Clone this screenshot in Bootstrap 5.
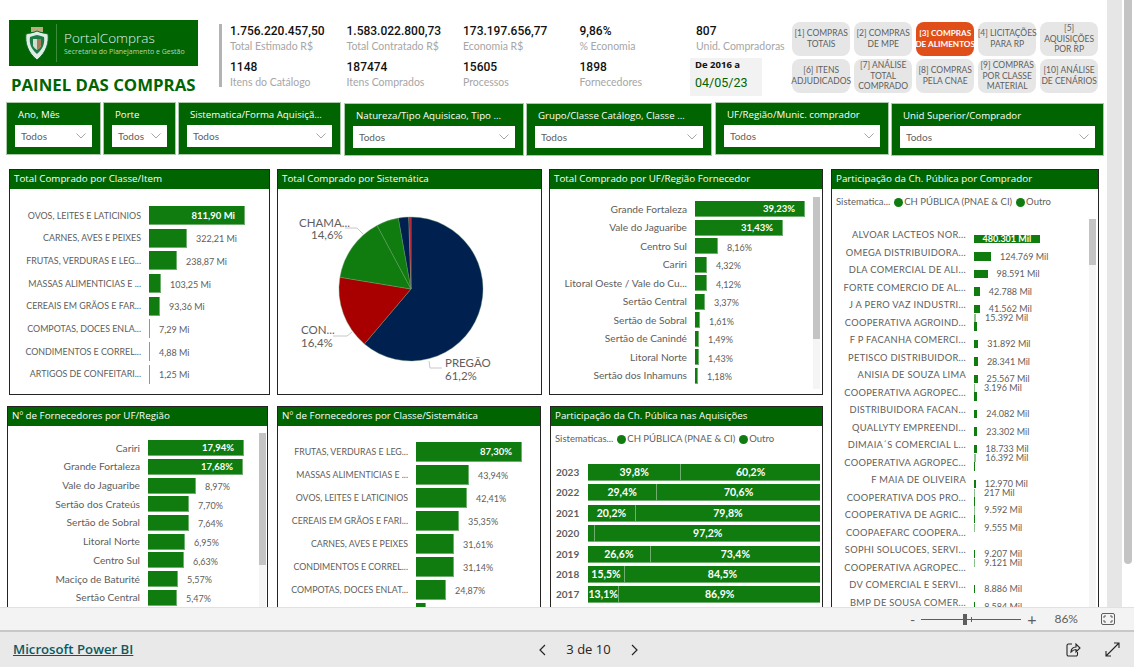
<!DOCTYPE html>
<html lang="pt-br">
<head>
  <meta charset="UTF-8">
  <meta name="viewport" content="width=device-width, initial-scale=1">
  <title>Painel das Compras</title>
  <link href="https://cdn.jsdelivr.net/npm/bootstrap@5.3.3/dist/css/bootstrap.min.css" rel="stylesheet">
  <style>
    html, body { height: 667px; overflow: hidden; background: #fff; }
    body { font-family: "Open Sans", sans-serif; color: #605e5c; }
    .report { height: 607px; overflow: hidden; }
    .canvas { width: 1107px; }
    .strip { width: 15px; background: #e6e6e6; }
    .outer-thumb { width: 8px; height: 564px; margin-left: 2px; background: #c4c4c4; border-radius: 0 0 4px 4px; }

    /* cabecalho */
    .top { height: 102px; padding: 20px 0 0 9px; }
    .logo-col { width: 189px; }
    .logo-box { height: 46px; background: #006400; color: #e6f0e6; padding-left: 16px; }
    .logo-sep { width: 1px; height: 38px; background: #3d8a3d; margin: 0 7px 0 7px; }
    .logo-name { font-size: 13.5px; font-weight: 300; line-height: 17px; }
    .logo-sub { font-size: 7px; line-height: 9px; color: #b7d4b7; white-space: nowrap; }
    .titulo { font-size: 16.8px; font-weight: 700; color: #006400; margin: 9px 0 0 2px; line-height: 20px; white-space: nowrap; }
    .divisor { width: 3px; height: 63px; background: #b3b3b3; margin: 4px 8px 0 21px; }
    .kpis { width: 562px; margin-top: 4px; display: grid; grid-template-columns: 116.5px 116.5px 116.5px 116.5px 96px; grid-auto-rows: 36px; }
    .kpi-val { font-family: Roboto, sans-serif; font-size: 12px; font-weight: 500; color: #111; line-height: 15px; }
    .kpi-cap { font-family: Lato, sans-serif; font-size: 10.5px; color: #a6a6a6; line-height: 15px; white-space: nowrap; }
    .data-box { width: 72px; height: 38px; margin: -2px 0 0 -6px; background: #f2f2f2; padding: 0 5px; }
    .data-de { font-size: 9.5px; font-weight: 700; color: #111; line-height: 13px; }
    .data-ate { font-family: Roboto, sans-serif; font-size: 12.5px; color: #006400; line-height: 24px; }
    .btns { margin-top: 2px; display: grid; grid-template-columns: repeat(5, 58.4px); grid-auto-rows: 33.5px; gap: 3.5px 3.6px; }
    .btn-pag { background: #e6e6e6; border-radius: 8px; font-family: Lato, sans-serif; font-size: 8.5px; line-height: 10.5px; color: #605e5c; text-align: center; display: flex; align-items: center; justify-content: center; padding: 0; white-space: nowrap; }
    .btn-pag.ativo { background: #e04e1a; color: #fff; font-weight: 700; font-size: 8.2px; }

    /* filtros */
    .filtros { margin-left: 6px; gap: 2px; height: 54px; }
    .filtro { background: #006400; border: 1px solid #a9c9a9; padding: 0 8px; height: 53px; color: #fff; }
    .filtro.baixo { margin-top: 1px; }
    .filtro-tit { font-size: 9.7px; line-height: 12px; padding: 6px 0 0 3px; height: 22px; white-space: nowrap; overflow: hidden; }
    .filtro-box { background: #fff; height: 22px; color: #605e5c; font-family: Lato, sans-serif; font-size: 10px; padding: 0 6px; }
    .f1 { width: 95px; } .f2 { width: 73px; } .f3 { width: 163px; } .f4 { width: 180px; margin-left: 1px; }
    .f5 { width: 186px; } .f6 { width: 174px; margin-left: 1px; } .f7 { width: 213px; }

    /* graficos */
    .graficos { margin-top: 13px; height: 500px; }
    .linha { gap: 7px; height: 226px; }
    .linha + .linha { margin-top: 11px; height: 240px; }
    .painel { border: 1px solid #252423; border-radius: 0; overflow: hidden; flex: none; }
    .painel .card-header { background: #006400; color: #fff; border: 0; border-radius: 0; padding: 0 0 0 4px; height: 19px; font-size: 9.8px; line-height: 18px; white-space: nowrap; }
    .c1 { width: 261px; margin-left: 9px; } .c2 { width: 265px; } .c3 { width: 274px; }
    .c4 { width: 261px; margin-left: 7px; } .c5 { width: 264px; margin-left: 2px; } .c6 { width: 273px; margin-left: 2px; }
    .c7 { width: 268px; height: 460px; margin-left: 8px; }

    .barras { padding-top: var(--topo); font-family: Lato, sans-serif; }
    .barra-lin { height: var(--passo); display: flex; align-items: center; }
    .barra-lab { width: var(--lab); margin-right: var(--sep); text-align: right; white-space: nowrap; font-size: var(--fonte); color: #605e5c; flex: none; }
    .barra { height: var(--alt); background: #107c10; border-right: 1px solid #6fae6f; border-bottom: 1px solid #6fae6f; color: #fff; font-weight: 700; font-size: 9.5px; text-align: right; line-height: var(--alt); white-space: nowrap; box-sizing: border-box; flex: none; }
    .barra.rotulada { padding-right: 9px; }
    .barra-val { font-size: 9px; margin: 2px 0 0 9px; color: #605e5c; white-space: nowrap; }
    .b1 { --topo: 15px; --passo: 22.7px; --alt: 19px; --lab: 131px; --sep: 8px; --fonte: 8.9px; }
    .b3 { --topo: 11px; --passo: 18.5px; --alt: 16px; --lab: 137px; --sep: 8px; --fonte: 10.2px; }
    .b4 { --topo: 13px; --passo: 18.7px; --alt: 16px; --lab: 132px; --sep: 8px; --fonte: 10.2px; }
    .b5 { --topo: 14px; --passo: 23px; --alt: 20px; --lab: 130px; --sep: 8px; --fonte: 8.8px; }

    .legenda { font-family: Lato, sans-serif; font-size: 9.5px; height: 25px; padding: 2px 0 0 4px; white-space: nowrap; }
    .ponto { width: 9px; height: 9px; border-radius: 50%; background: #107c10; display: inline-block; margin: 0 1px 0 4px; }
    .rolagem { position: absolute; width: 7px; background: #f5f5f5; }
    .rolagem i { display: block; background: #c4c4c4; width: 100%; }
    .r3 { left: 263px; top: 27px; height: 192px; } .r3 i { height: 142px; }
    .r4 { left: 251px; top: 26px; height: 214px; } .r4 i { height: 132px; }
    .r7 { left: 257px; top: 49px; height: 400px; } .r7 i { height: 46px; }

    .anos { padding-top: 13px; }
    .ano-lin { display: flex; align-items: center; height: 17px; margin-bottom: 3.4px; }
    .ano-lab { width: 37px; padding-left: 5px; font-weight: 700; font-size: 10px; font-family: Lato, sans-serif; flex: none; }
    .pilha { width: 232px; height: 17px; display: flex; }
    .seg { background: #107c10; color: #fff; font-family: Lato, sans-serif; font-weight: 700; font-size: 10.5px; line-height: 17px; text-align: center; white-space: nowrap; overflow: hidden; border-bottom: 1px solid #6fae6f; }
    .seg + .seg { border-left: 1px solid #6fae6f; }

    .comp-topo { padding-top: 12px; }
    .comp-lin { height: 17.5px; display: flex; font-family: Lato, sans-serif; }
    .comp-lab { width: 134px; margin-right: 8px; text-align: right; font-size: 9.3px; letter-spacing: .3px; line-height: 17.5px; white-space: nowrap; flex: none; }
    .comp-bar { flex: 1; }
    .comp-slot { height: 8.75px; display: flex; align-items: center; }
    .comp-ret { height: 8.5px; background: #107c10; color: #fff; font-weight: 700; font-size: 9px; line-height: 8.5px; text-align: center; white-space: nowrap; flex: none; }
    .comp-ret.fraco { background: #8cc08c; }
    .comp-val { font-size: 9px; line-height: 8px; margin-left: 9px; white-space: nowrap; }

    /* rodape */
    .barra-zoom { height: 23px; background: #f3f3f3; border-top: 1px solid #e1e1e1; font-family: Lato, sans-serif; color: #605e5c; padding-right: 19px; }
    .trilho { width: 100px; height: 1px; background: #605e5c; position: relative; margin: 0 6px; }
    .cursor { position: absolute; left: 42px; top: -5px; width: 4px; height: 11px; background: #605e5c; }
    .marca { position: absolute; left: 50px; top: -2px; width: 1px; height: 5px; background: #605e5c; }
    .zoom-pct { font-size: 12px; margin: 0 23px 0 18px; }
    .rodape { height: 37px; background: #e9e9e9; border-top: 2px solid #c8c8c8; position: relative; }
    .rodape-link { font-size: 13.2px; font-weight: 600; color: #0b5a63; text-decoration: underline; margin-left: 13px; }
    .pager { position: absolute; left: 538px; top: 0; height: 35px; width: 101px; color: #252423; font-size: 13px; }
    .acoes { gap: 24px; margin-right: 14px; }
  </style>
</head>
<body>
  <div class="report d-flex">
    <div class="canvas">
      <div class="top d-flex align-items-start">
        <div class="logo-col">
          <div class="logo-box d-flex align-items-center">
            <svg width="24" height="33" viewBox="0 0 24 33">
              <rect x="6" y="0" width="12" height="5" fill="#b9ad7e"/>
              <path d="M12 4 C16 6 20 6 23 7 C24 15 22 25 12 33 C2 25 0 15 1 7 C4 6 8 6 12 4Z" fill="#dfeee2" stroke="#0b6b2f"/>
              <path d="M12 8 C15 9 17 9 19 10 C20 16 18 22 12 27 C6 22 4 16 5 10 C7 9 9 9 12 8Z" fill="#1f7a4a"/>
              <path d="M8 12 H16 V19 C15 21 13 22 12 23 C11 22 9 21 8 19Z" fill="#cfe0d0"/>
              <path d="M12 12 H16 V19 C15 21 13 22 12 23Z" fill="#a87a55"/>
            </svg>
            <div class="logo-sep"></div>
            <div>
              <div class="logo-name">PortalCompras</div>
              <div class="logo-sub">Secretaria do Planejamento e Gestão</div>
            </div>
          </div>
          <div class="titulo">PAINEL DAS COMPRAS</div>
        </div>
        <div class="divisor"></div>
        <div class="kpis">
          <div><div class="kpi-val">1.756.220.457,50</div><div class="kpi-cap">Total Estimado R$</div></div>
          <div><div class="kpi-val">1.583.022.800,73</div><div class="kpi-cap">Total Contratado R$</div></div>
          <div><div class="kpi-val">173.197.656,77</div><div class="kpi-cap">Economia R$</div></div>
          <div><div class="kpi-val">9,86%</div><div class="kpi-cap">% Economia</div></div>
          <div><div class="kpi-val">807</div><div class="kpi-cap">Unid. Compradoras</div></div>
          <div><div class="kpi-val">1148</div><div class="kpi-cap">Itens do Catálogo</div></div>
          <div><div class="kpi-val">187474</div><div class="kpi-cap">Itens Comprados</div></div>
          <div><div class="kpi-val">15605</div><div class="kpi-cap">Processos</div></div>
          <div><div class="kpi-val">1898</div><div class="kpi-cap">Fornecedores</div></div>
          <div class="data-box"><div class="data-de">De 2016 a</div><div class="data-ate">04/05/23</div></div>
        </div>
        <div class="btns">
          <div class="btn-pag">[1] COMPRAS<br>TOTAIS</div>
          <div class="btn-pag">[2] COMPRAS<br>DE MPE</div>
          <div class="btn-pag ativo">[3] COMPRAS<br>DE ALIMENTOS</div>
          <div class="btn-pag">[4] LICITAÇÕES<br>PARA RP</div>
          <div class="btn-pag">[5]<br>AQUISIÇÕES<br>POR RP</div>
          <div class="btn-pag">[6] ITENS<br>ADJUDICADOS</div>
          <div class="btn-pag">[7] ANÁLISE<br>TOTAL<br>COMPRADO</div>
          <div class="btn-pag">[8] COMPRAS<br>PELA CNAE</div>
          <div class="btn-pag">[9] COMPRAS<br>POR CLASSE<br>MATERIAL</div>
          <div class="btn-pag">[10] ANÁLISE<br>DE CENÁRIOS</div>
        </div>
      </div>

      <div class="filtros d-flex align-items-start" id="filtros"></div>

      <div class="graficos d-flex align-items-start">
        <div>
          <div class="linha d-flex">
            <div class="card painel c1">
              <div class="card-header">Total Comprado por Classe/Item</div>
              <div class="barras b1" id="g1"></div>
            </div>
            <div class="card painel c2">
              <div class="card-header">Total Comprado por Sistemática</div>
              <svg width="263" height="205" id="pizza" font-family="Lato, sans-serif" font-size="11.5" fill="#605e5c">
                <g id="fatias"></g>
                <path d="M67 39 H79 L85 45 M55 147 H69 L74 143 M164 179 H152 L151 172" fill="none" stroke="#c8c8c8"/>
                <text x="21" y="38">CHAMA...</text><text x="33" y="50">14,6%</text>
                <text x="23" y="145">CON...</text><text x="23" y="158">16,4%</text>
                <text x="167" y="178">PREGÃO</text><text x="167" y="191">61,2%</text>
              </svg>
            </div>
            <div class="card painel c3 position-relative">
              <div class="card-header">Total Comprado por UF/Região Fornecedor</div>
              <div class="barras b3" id="g3"></div>
              <div class="rolagem r3"><i></i></div>
            </div>
          </div>
          <div class="linha d-flex">
            <div class="card painel c4 position-relative">
              <div class="card-header">Nº de Fornecedores por UF/Região</div>
              <div class="barras b4" id="g4"></div>
              <div class="rolagem r4"><i></i></div>
            </div>
            <div class="card painel c5">
              <div class="card-header">Nº de Fornecedores por Classe/Sistemática</div>
              <div class="barras b5" id="g5"></div>
            </div>
            <div class="card painel c6">
              <div class="card-header">Participação da Ch. Pública nas Aquisições</div>
              <div class="legenda d-flex align-items-center">Sistematicas... <span class="ponto"></span>CH PÚBLICA (PNAE &amp; CI) <span class="ponto"></span>Outro</div>
              <div class="anos" id="g6"></div>
            </div>
          </div>
        </div>
        <div class="card painel c7 position-relative">
          <div class="card-header">Participação da Ch. Pública por Comprador</div>
          <div class="legenda d-flex align-items-center">Sistematica... <span class="ponto"></span>CH PÚBLICA (PNAE &amp; CI) <span class="ponto"></span>Outro</div>
          <div id="g7" class="comp-topo"></div>
          <div class="rolagem r7"><i></i></div>
        </div>
      </div>
    </div>
    <div class="strip"></div>
    <div class="outer-thumb"></div>
  </div>

  <div class="barra-zoom d-flex align-items-center justify-content-end">
    <span class="small">-</span>
    <div class="trilho"><div class="cursor"></div><div class="marca"></div></div>
    <span>+</span>
    <span class="zoom-pct">86%</span>
    <svg width="14" height="12" viewBox="0 0 14 12" fill="none" stroke="#605e5c"><rect x=".5" y=".5" width="13" height="11" rx="1.5"/><path d="M3 5V3H5M9 3H11V5M11 7V9H9M5 9H3V7"/></svg>
  </div>
  <div class="rodape d-flex align-items-center justify-content-between">
    <a class="rodape-link" href="#">Microsoft Power BI</a>
    <div class="pager d-flex align-items-center justify-content-between">
      <svg width="8" height="12" viewBox="0 0 8 12" fill="none" stroke="#252423" stroke-width="1.2"><path d="M7 1L2 6L7 11"/></svg>
      <span>3 de 10</span>
      <svg width="8" height="12" viewBox="0 0 8 12" fill="none" stroke="#252423" stroke-width="1.2"><path d="M1 1L6 6L1 11"/></svg>
    </div>
    <div class="acoes d-flex align-items-center">
      <svg width="15" height="15" viewBox="0 0 15 15" fill="none" stroke="#252423" stroke-width="1.1"><path d="M6 2H2.5A1.5 1.5 0 0 0 1 3.5V12.500A1.500 1.500 0 0 0 2.500 14H10A1.500 1.500 0 0 0 11.500 12.500V10M5 10C5 7 7 5 10 5V2L14 6L10 10V7.500C8 7.500 6.500 8.500 5 10Z"/></svg>
      <svg width="15" height="15" viewBox="0 0 15 15" fill="none" stroke="#252423" stroke-width="1.1"><path d="M14 1L1 14M9 1H14V6M1 9V14H6"/></svg>
    </div>
  </div>

  <script>
    const filtros = [
      ['f1', 'Ano, Mês', 0], ['f2', 'Porte', 0], ['f3', 'Sistematica/Forma Aquisiçã...', 0],
      ['f4', 'Natureza/Tipo Aquisicao, Tipo ...', 1], ['f5', 'Grupo/Classe Catálogo, Classe ...', 1],
      ['f6', 'UF/Região/Munic. comprador', 0], ['f7', 'Unid Superior/Comprador', 1]
    ];
    document.getElementById('filtros').innerHTML = filtros.map(f => `
      <div class="filtro ${f[0]} ${f[2] ? 'baixo' : ''}">
        <div class="filtro-tit">${f[1]}</div>
        <div class="filtro-box d-flex align-items-center justify-content-between">Todos
          <svg width="10" height="6" viewBox="0 0 10 6" fill="none" stroke="#a6a6a6"><path d="M.5 .5L5 5L9.500 .5"/></svg>
        </div>
      </div>`).join('');

    // nome, valor em px, texto, rotulo dentro da barra
    function barras(id, dados) {
      document.getElementById(id).innerHTML = dados.map(d => `
        <div class="barra-lin">
          <div class="barra-lab">${d[0]}</div>
          <div class="barra ${d[3] ? 'rotulada' : ''}" style="width:${d[1]}px">${d[3] ? d[2] : ''}</div>
          ${d[3] ? '' : `<div class="barra-val">${d[2]}</div>`}
        </div>`).join('');
    }

    barras('g1', [
      ['OVOS, LEITES E LATICINIOS', 96, '811,90 Mi', 1], ['CARNES, AVES E PEIXES', 38, '322,21 Mi'],
      ['FRUTAS, VERDURAS E LEG...', 28, '238,87 Mi'], ['MASSAS ALIMENTICIAS E ...', 12, '103,25 Mi'],
      ['CEREAIS EM GRÃOS E FAR...', 11, '93,36 Mi'], ['COMPOTAS, DOCES ENLA...', 1, '7,29 Mi'],
      ['CONDIMENTOS E CORREL...', 1, '4,88 Mi'], ['ARTIGOS DE CONFEITARI...', 1, '1,25 Mi']
    ]);
    barras('g3', [
      ['Grande Fortaleza', 110, '39,23%', 1], ['Vale do Jaguaribe', 88, '31,43%', 1], ['Centro Sul', 23, '8,16%'],
      ['Cariri', 12, '4,32%'], ['Litoral Oeste / Vale do Cu...', 12, '4,12%'], ['Sertão Central', 10, '3,37%'],
      ['Sertão de Sobral', 5, '1,61%'], ['Sertão de Canindé', 4, '1,49%'], ['Litoral Norte', 4, '1,43%'],
      ['Sertão dos Inhamuns', 3, '1,18%']
    ]);
    barras('g4', [
      ['Cariri', 96, '17,94%', 1], ['Grande Fortaleza', 95, '17,68%', 1], ['Vale do Jaguaribe', 48, '8,97%'],
      ['Sertão dos Crateús', 41, '7,70%'], ['Sertão de Sobral', 41, '7,64%'], ['Litoral Norte', 37, '6,95%'],
      ['Centro Sul', 36, '6,63%'], ['Maciço de Baturité', 30, '5,57%'], ['Sertão Central', 29, '5,47%']
    ]);
    barras('g5', [
      ['FRUTAS, VERDURAS E LEG...', 106, '87,30%', 1], ['MASSAS ALIMENTICIAS E ...', 53, '43,94%'],
      ['OVOS, LEITES E LATICINIOS', 51, '42,41%'], ['CEREAIS EM GRÃOS E FARI...', 43, '35,35%'],
      ['CARNES, AVES E PEIXES', 38, '31,61%'], ['CONDIMENTOS E CORREL...', 38, '31,14%'],
      ['COMPOTAS, DOCES ENLAT...', 30, '24,87%'], ['', 10, '']
    ]);

    const anos = [[2023, 39.8], [2022, 29.4], [2021, 20.2], [2020, 2.8], [2019, 26.6], [2018, 15.5], [2017, 13.1]];
    const pct = v => v.toFixed(1).replace('.', ',') + '%';
    document.getElementById('g6').innerHTML = anos.map(a => `
      <div class="ano-lin">
        <div class="ano-lab">${a[0]}</div>
        <div class="pilha">
          <div class="seg" style="width:${a[1]}%">${a[1] > 5 ? pct(a[1]) : ''}</div>
          <div class="seg" style="width:${100 - a[1]}%">${pct(100 - a[1])}</div>
        </div>
      </div>`).join('');

    // comprador: nome, mil CH publica, mil outro, rotulo em qual serie
    const compradores = [
      ['ALVOAR LACTEOS NOR...', 0, 480301, 'dentro'], ['OMEGA DISTRIBUIDORA...', 0, 124769], ['DLA COMERCIAL DE ALI...', 0, 98591],
      ['FORTE COMERCIO DE AL...', 0, 42788], ['J A PERO VAZ INDUSTRI...', 0, 41562], ['COOPERATIVA AGROIND...', 15392, 22000, 'cima'],
      ['F P FACANHA COMERCI...', 0, 31892], ['PETISCO DISTRIBUIDOR...', 0, 28341], ['ANISIA DE SOUZA LIMA', 0, 25567],
      ['COOPERATIVA AGROPEC...', 3196, 22000, 'cima'], ['DISTRIBUIDORA FACAN...', 0, 24082], ['QUALLYTY EMPREENDI...', 0, 23302],
      ['DIMAIA´S COMERCIAL L...', 0, 18733], ['COOPERATIVA AGROPEC...', 16392, 2000, 'cima'], ['F MAIA DE OLIVEIRA', 0, 12970],
      ['COOPERATIVA DOS PRO...', 217, 9000, 'cima'], ['COOPERATIVA DE AGRIC...', 9592, 1000, 'cima'], ['COOPAEFARC COOPERA...', 9555, 0, 'cima'],
      ['SOPHI SOLUCOES, SERVI...', 0, 9207], ['COOPERATIVA AGROPEC...', 9121, 0, 'cima'], ['DV COMERCIAL E SERVI...', 0, 8886],
      ['BMP DE SOUSA COMER...', 0, 8584]
    ];
    const mil = v => v.toLocaleString('pt-BR').replace(',', '.') + ' Mil';
    const larg = v => Math.max(v * 0.000137, 1);
    document.getElementById('g7').innerHTML = compradores.map(c => {
      const cima = c[1] ? `<div class="comp-ret fraco" style="width:${larg(c[1])}px"></div><div class="comp-val">${mil(c[1])}</div>` : '';
      const baixo = !c[2] ? '' : c[3] === 'dentro'
        ? `<div class="comp-ret" style="width:${larg(c[2])}px">${mil(c[2])}</div>`
        : `<div class="comp-ret" style="width:${larg(c[2])}px"></div>${c[3] ? '' : `<div class="comp-val">${mil(c[2])}</div>`}`;
      return `<div class="comp-lin">
        <div class="comp-lab">${c[0]}</div>
        <div class="comp-bar"><div class="comp-slot">${cima}</div><div class="comp-slot">${baixo}</div></div>
      </div>`;
    }).join('');

    const fatias = [[61.2, '#002050'], [16.4, '#a80000'], [14.6, '#107c10'], [5, '#107c10'], [2.3, '#002050'], [0.5, '#c8102e']];
    let ang = 0;
    document.getElementById('fatias').innerHTML = fatias.map(f => {
      const p = a => [133 + 72 * Math.sin(a * Math.PI / 50), 100 - 72 * Math.cos(a * Math.PI / 50)];
      const [x1, y1] = p(ang);
      ang += f[0];
      const [x2, y2] = p(ang);
      return `<path d="M133 100L${x1} ${y1}A72 72 0 ${f[0] > 50 ? 1 : 0} 1 ${x2} ${y2}Z" fill="${f[1]}" stroke="#6fa06f" stroke-width=".4"/>`;
    }).join('');
  </script>
  <script src="https://cdn.jsdelivr.net/npm/bootstrap@5.3.3/dist/js/bootstrap.bundle.min.js"></script>
</body>
</html>
